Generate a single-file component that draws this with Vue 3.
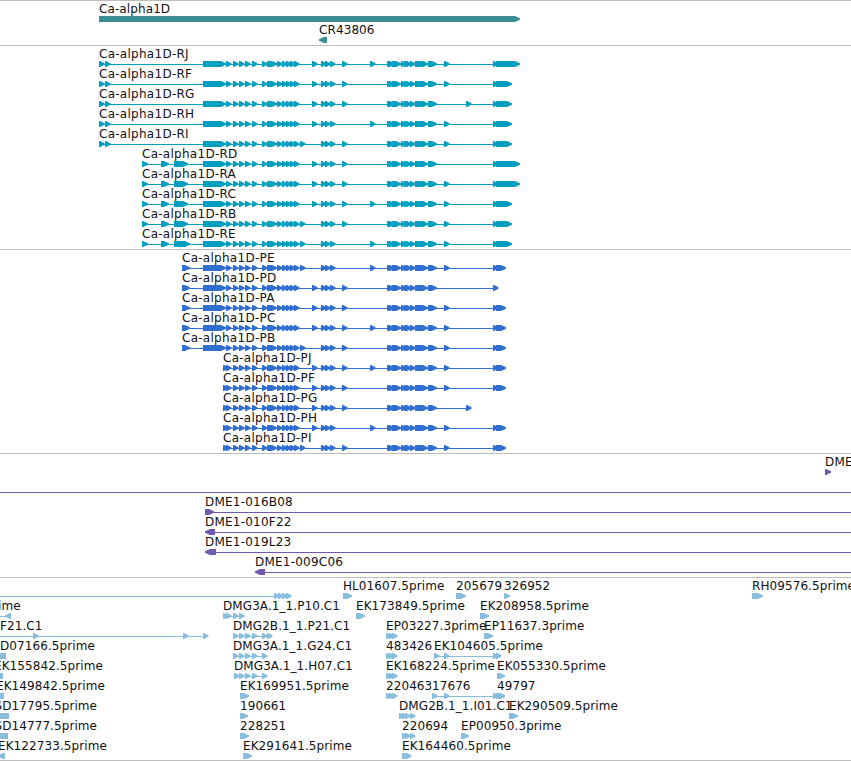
<template>
  <main class="browser">
    <section v-for="track in tracks" :key="track.name" class="track" :class="track.name">
      <svg v-for="(row, i) in track.rows" :key="i" class="row" width="851" :height="track.rowHeight || 20">
        <g v-for="(f, j) in row" :key="j" class="feature">
          <rect v-if="f.line" :x="f.line[0]" y="18" :width="f.line[1] - f.line[0]" height="1" />
          <polygon v-for="(b, k) in f.blocks" :key="k" :points="arrow(b, f.reverse)" />
          <text v-if="f.label" :x="f.x" y="12">{{ f.label }}</text>
        </g>
      </svg>
    </section>
  </main>
</template>

<script setup>
// a block is [start, end], the last pixels of it taper to a tip
function arrow([a, b], reverse) {
  const tip = Math.min(5, b - a - 1)
  if (reverse) {
    const edge = a + tip
    return `${b},15 ${edge},15 ${a},17.3 ${a},18.7 ${edge},21 ${b},21`
  }
  const edge = b - tip
  return `${a},15 ${edge},15 ${b},17.3 ${b},18.7 ${edge},21 ${a},21`
}

const small = (...starts) => starts.map(s => [s, s + 5.5])

function feature(label, x, blocks, opts = {}) {
  const last = blocks.length ? blocks[blocks.length - 1][0] : x
  const line = blocks.length > 1 ? [blocks[0][0], last] : null
  return { label, x, blocks, line, ...opts }
}

const shared = [
  ...small(226, 233, 239, 245, 252, 262), [267, 277],
  ...small(277, 282, 286, 290, 294, 321, 325, 330, 387, 389), [392, 401],
  ...small(401, 404, 406, 410), [415, 428], [428, 437],
]
const optional = Object.fromEntries(
  Object.entries({ A: 300, B: 312, C: 342, D: 370, E: 444, F: 466 }).map(([k, s]) => [k, small(s)[0]])
)
const big = [203, 226]

function transcript(name, x, head, exons, tail) {
  const blocks = [...head, ...shared, ...exons.split('').map(e => optional[e]), ...tail]
  blocks.sort((p, q) => p[0] - q[0])
  return [feature('Ca-alpha1D-' + name, x, blocks)]
}

const rHead = [...small(99, 105), big]
const rHead2 = [[142, 148], [161, 169], [174, 188], big]
const pHead = [[182, 190], big]
const pHead2 = small(223)
const longEnd = [[493, 498], [496, 520]]
const shortEnd = [[493, 498], [496, 512]]
const pEnd = [[493, 498], [496, 506]]

const trio = small(386, 389, 392)

const tracks = [
  {
    name: 'gene',
    rowHeight: 21,
    rows: [
      [feature('Ca-alpha1D', 99, [[99, 520]])],
      [feature('CR43806', 319, [[319, 327]], { reverse: true })],
    ],
  },
  {
    name: 'transcript',
    rows: [
      transcript('RJ', 99, rHead, 'BCDE', longEnd),
      transcript('RF', 99, rHead, 'BCE', shortEnd),
      transcript('RG', 99, rHead, 'BCF', shortEnd),
      transcript('RH', 99, rHead, 'BDE', shortEnd),
      transcript('RI', 99, rHead, 'ACE', shortEnd),
      transcript('RD', 142, rHead2, 'BC', longEnd),
      transcript('RA', 142, rHead2, 'BCE', longEnd),
      transcript('RC', 142, rHead2, 'BCDE', shortEnd),
      transcript('RB', 142, rHead2, 'ACE', shortEnd),
      transcript('RE', 142, [[142, 148], [161, 169], [174, 190], big], 'ADE', shortEnd),
    ],
  },
  {
    name: 'cds',
    rows: [
      transcript('PE', 182, pHead, 'ADE', pEnd),
      transcript('PD', 182, pHead, 'BC', small(493)),
      transcript('PA', 182, pHead, 'BCE', pEnd),
      transcript('PC', 182, pHead, 'BCDE', pEnd),
      transcript('PB', 182, pHead, 'ACE', pEnd),
      transcript('PJ', 223, pHead2, 'BCDE', pEnd),
      transcript('PF', 223, pHead2, 'BCE', pEnd),
      transcript('PG', 223, pHead2, 'BCF', []),
      transcript('PH', 223, pHead2, 'BDE', pEnd),
      transcript('PI', 223, pHead2, 'ACE', pEnd),
    ],
  },
  {
    name: 'clone',
    rows: [
      [feature('DME1-', 825, [[825, 831]])],
      [feature('', 0, [], { line: [0, 851] })],
      [feature('DME1-016B08', 205, [[205, 214]], { line: [205, 851] })],
      [feature('DME1-010F22', 205, [[205, 215]], { line: [205, 851], reverse: true })],
      [feature('DME1-019L23', 205, [[205, 216]], { line: [205, 851], reverse: true })],
      [feature('DME1-009C06', 255, [[255, 265]], { line: [255, 851], reverse: true })],
    ],
  },
  {
    name: 'est',
    rows: [
      [
        feature('', 0, small(274, 278, 282, 286), { line: [0, 286] }),
        feature('HL01607.5prime', 343, [[343, 352]]),
        feature('205679', 456, [[456, 466]]),
        feature('326952', 504, [[504, 510]]),
        feature('RH09576.5prime', 752, [[752, 763]]),
      ],
      [
        feature('ime', -2, [[5, 11]], { line: [0, 8], reverse: true }),
        feature('DMG3A.1_1.P10.C1', 223, small(223, 226, 233, 239)),
        feature('EK173849.5prime', 356, [[356, 365]]),
        feature('EK208958.5prime', 480, [[480, 489]]),
      ],
      [
        feature('F21.C1', 0, small(33, 183, 203), { line: [0, 203] }),
        feature('DMG2B.1_1.P21.C1', 233, small(233, 239, 245, 252, 262, 267)),
        feature('EP03227.3prime', 386, trio),
        feature('EP11637.3prime', 484, [[484, 493]]),
      ],
      [
        feature('D07166.5prime', 0, [[-8, 6]], { reverse: true }),
        feature('DMG3A.1_1.G24.C1', 233, small(233, 239, 245, 252, 262)),
        feature('483426', 386, trio),
        feature('EK104605.5prime', 434, small(434, 444, 493, 496)),
      ],
      [
        feature('EK155842.5prime', -6, [[-8, 3]], { reverse: true }),
        feature('DMG3A.1_1.H07.C1', 234, small(234, 239, 245, 252, 262)),
        feature('EK168224.5prime', 386, trio),
        feature('EK055330.5prime', 497, [[497, 505]]),
      ],
      [
        feature('EK149842.5prime', -4, [[-5, 4]], { reverse: true }),
        feature('EK169951.5prime', 240, [[240, 249]]),
        feature('220463', 386, trio),
        feature('17676', 432, [...small(432, 444, 493), [496, 505]]),
        feature('49797', 497, [[497, 505]]),
      ],
      [
        feature('SD17795.5prime', -5.5, [[-6, 9]], { reverse: true }),
        feature('190661', 240, [[240, 248]]),
        feature('DMG2B.1_1.I01.C1', 399, small(399, 402, 405, 410)),
        feature('EK290509.5prime', 509, [[509, 518]]),
      ],
      [
        feature('SD14777.5prime', -5.5, [[-6, 8]], { reverse: true }),
        feature('228251', 240, [[240, 249]]),
        feature('220694', 402, small(402, 405, 410)),
        feature('EP00950.3prime', 461, [[461, 469]]),
      ],
      [
        feature('EK122733.5prime', -2, [[-2, 5]], { reverse: true }),
        feature('EK291641.5prime', 243, [[243, 252]]),
        feature('EK164460.5prime', 402, small(402, 404, 406)),
      ],
    ],
  },
]
</script>

<style scoped>
.browser {
  display: flex; flex-direction: column;
  width: 851px; height: 761px; overflow: hidden;
  background: #fff; border-bottom: 1px solid #bdbdbd; box-sizing: border-box;
}

.track { display: flex; flex-direction: column; flex: none; box-sizing: border-box; border-top: 1px solid #bdbdbd; }
.row { display: block; flex: none; overflow: visible; }

.gene { height: 45px; fill: #3d8e94; letter-spacing: 0.1px; }
.transcript { height: 204px; fill: #009fc0; letter-spacing: 0.27px; }
.cds { height: 204px; fill: #306fd0; letter-spacing: 0.27px; }
.clone { height: 124px; fill: #7359ad; letter-spacing: 0.22px; }
.est { height: 183px; fill: #88bddd; letter-spacing: 0.08px; }

text { font-family: "DejaVu Sans", sans-serif; font-size: 12px; fill: #111; }
</style>
